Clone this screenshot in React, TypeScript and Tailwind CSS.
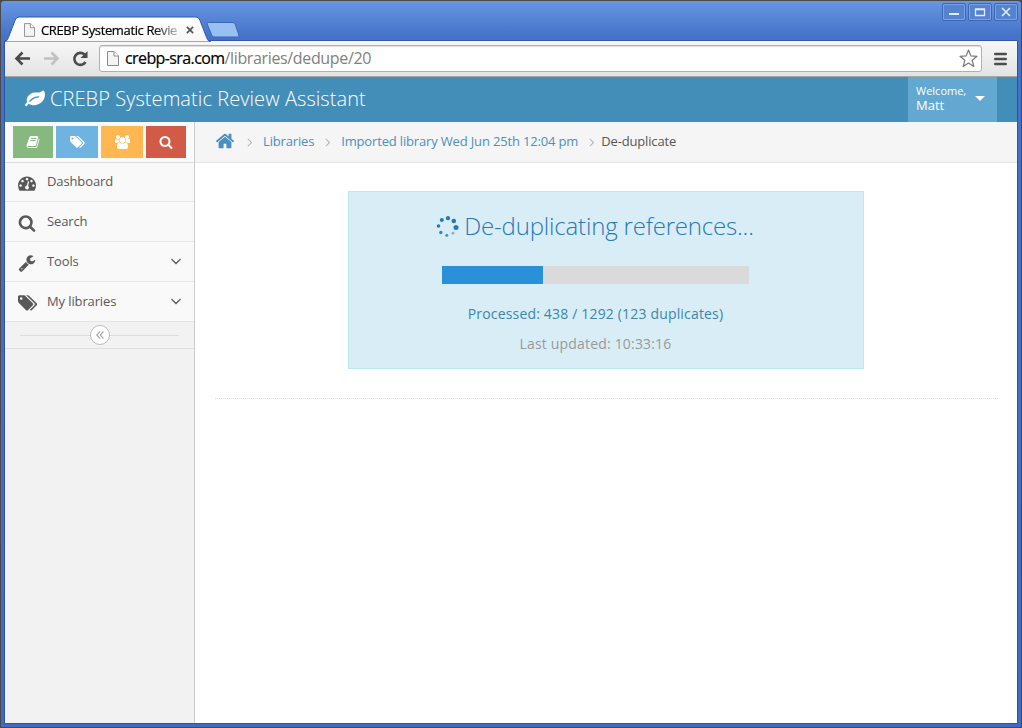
import React from "react";

const P = {
  search: "M1216 832q0-185-131.5-316.5t-316.5-131.5-316.5 131.5-131.5 316.5 131.5 316.5 316.5 131.5 316.5-131.5 131.5-316.5zm512 832q0 52-38 90t-90 38q-54 0-90-38l-343-342q-179 124-399 124-143 0-273.5-55.5t-225-150-150-225-55.5-273.5 55.5-273.5 150-225 225-150 273.5-55.5 273.5 55.5 225 150 150 225 55.5 273.5q0 220-124 399l343 343q37 37 37 90z",
  home: "M1472 992v480q0 26-19 45t-45 19h-384v-384h-256v384h-384q-26 0-45-19t-19-45v-480q0-1 .5-3t.5-3l575-474 575 474q1 2 1 6zm223-69l-62 74q-8 9-21 11h-3q-13 0-21-7l-692-577-692 577q-12 8-24 7-13-2-21-11l-62-74q-8-10-7-23.5t11-21.5l719-599q32-26 76-26t76 26l244 204v-195q0-14 9-23t23-9h192q14 0 23 9t9 23v408l219 182q10 8 11 21.5t-7 23.5z",
  down: "M1395 736q0 13-10 23l-466 466q-10 10-23 10t-23-10l-466-466q-10-10-10-23t10-23l50-50q10-10 23-10t23 10l393 393 393-393q10-10 23-10t23 10l50 50q10 10 10 23z",
  right: "M1171 960q0 13-10 23l-466 466q-10 10-23 10t-23-10l-50-50q-10-10-10-23t10-23l393-393-393-393q-10-10-10-23t10-23l50-50q10-10 23-10t23 10l466 466q10 10 10 23z",
  wrench: "M448 1472q0-26-19-45t-45-19-45 19-19 45 19 45 45 19 45-19 19-45zm644-420l-682 682q-37 37-90 37-52 0-91-37l-106-108q-38-36-38-90 0-53 38-91l681-681q39 98 114.5 173.5t173.5 114.5zm634-435q0 39-23 106-47 134-164.5 217.5t-258.5 83.5q-185 0-316.5-131.5t-131.5-316.5 131.5-316.5 316.5-131.5q58 0 121.5 16.5t107.5 46.5q16 11 16 28t-16 28l-293 169v224l193 107q5-3 79-48.5t135.5-81 70.5-35.5q15 0 23.5 10t8.5 25z",
  tags: "M448 448q0-53-37.5-90.5t-90.5-37.5-90.5 37.5-37.5 90.5 37.5 90.5 90.5 37.5 90.5-37.5 37.5-90.5zm1067 576q0 53-37 90l-491 492q-39 37-91 37-53 0-90-37l-715-716q-38-37-64.5-101t-26.5-117v-416q0-52 38-90t90-38h416q53 0 117 26.5t102 64.5l715 714q37 39 37 91zm384 0q0 53-37 90l-491 492q-39 37-91 37-36 0-59-14t-53-45l470-470q37-37 37-90 0-52-37-91l-715-714q-38-38-102-64.5t-117-26.5h224q53 0 117 26.5t102 64.5l715 714q37 39 37 91z",
  leaf: "M1280 704q0-26-19-45t-45-19q-172 0-318 49.5t-259.5 134-235.5 219.5q-19 21-19 45 0 26 19 45t45 19q24 0 45-19 27-24 74-71t67-66q137-124 268.5-176t313.5-52q26 0 45-19t19-45zm512-198q0 95-20 193-46 224-184.5 383t-357.5 268q-214 108-438 108-148 0-286-47-15-5-88-42t-96-37q-16 0-39.5 32t-45 70-52.5 70-60 32q-43 0-63.5-17.5t-45.5-59.5q-2-4-6-11t-5.5-10-3-9.5-1.500-13.500q0-35 31-73.500t68-65.500 68-56 31-48q0-4-14-38t-16-44q-9-51-9-104 0-115 43.500-220t119-184.500 170.500-139 204-95.500q55-18 145-25.500t179.500-9 178.500-6 163.500-24 113.500-56.500l29.500-29.500 29.500-28 27-20 36.500-16 43.500-4.500q39 0 70.500 46t47.500 112 24 124 8 96z",
  dashboard: "M384 1152q0-53-37.5-90.5t-90.5-37.5-90.5 37.5-37.5 90.5 37.5 90.5 90.5 37.5 90.5-37.5 37.5-90.5zm192-448q0-53-37.5-90.5t-90.5-37.5-90.5 37.5-37.5 90.5 37.5 90.5 90.5 37.5 90.5-37.5 37.5-90.5zm428 481l101-382q6-26-7.5-48.5t-38.5-29.5-48 6.5-30 39.5l-101 382q-60 5-107 43.5t-63 98.5q-20 77 20 146t117 89 146-20 89-117q16-60-6-117t-72-91zm660-33q0-53-37.5-90.5t-90.5-37.5-90.5 37.5-37.5 90.5 37.5 90.5 90.5 37.5 90.5-37.5 37.5-90.5zm-640-640q0-53-37.5-90.5t-90.5-37.5-90.5 37.5-37.5 90.5 37.5 90.5 90.5 37.5 90.5-37.5 37.5-90.5zm448 192q0-53-37.5-90.5t-90.5-37.5-90.5 37.5-37.5 90.5 37.5 90.5 90.5 37.5 90.5-37.5 37.5-90.5zm320 448q0 261-141 483-19 29-54 29h-1402q-35 0-54-29-141-221-141-483 0-182 71-348t191-286 286-191 348-71 348 71 286 191 191 286 71 348z",
  book: "M1703 478q40 57 18 129l-275 906q-19 64-76.5 107.5t-122.5 43.5h-923q-77 0-148.5-53.5t-99.5-131.5q-24-67-2-127 0-4 3-27t4-37q1-8-3-21.5t-3-19.5q2-11 8-21t16.5-23.5 16.5-23.5q23-38 45-91.5t30-91.5q3-10 .5-30t-.5-28q3-11 17-28t17-23q21-36 42-92t25-90q1-9-2.5-32t.5-28q4-13 22-30.5t22-22.5q19-26 42.5-84.5t27.5-96.5q1-8-3-25.5t-2-26.5q2-8 9-18t18-23 17-21q8-12 16.5-30.5t15-35 16-36 19.5-32 26.5-23.5 36-11.5 47.5 5.5l-1 3q38-9 51-9h761q74 0 114 56t18 130l-274 906q-36 119-71.5 153.5t-128.5 34.5h-869q-27 0-38 15-11 16-1 43 24 70 144 70h923q29 0 56-15.5t35-41.5l300-987q7-22 5-57 38 15 59 43zm-1064 2q-4 13 2 22.5t20 9.5h608q13 0 25.5-9.5t16.5-22.5l21-64q4-13-2-22.5t-20-9.5h-608q-13 0-25.5 9.5t-16.5 22.5zm-83 256q-4 13 2 22.5t20 9.5h608q13 0 25.5-9.5t16.5-22.5l21-64q4-13-2-22.5t-20-9.5h-608q-13 0-25.5 9.5t-16.5 22.5z",
  group: "M593 896q-162 5-265 128h-134q-82 0-138-40.5t-56-118.5q0-353 124-353 6 0 43.5 21t97.5 42.5 119 21.5q67 0 133-23-5 37-5 66 0 159 93 299zm1071 637q0 120-73 189.5t-194 69.5h-874q-121 0-194-69.5t-73-189.5q0-53 3.5-103.5t14-109 26.5-108.5 43-97.5 62-81 85.5-53.5 111.5-20q10 0 43 21.5t73 48 107 48 135 21.5 135-21.5 107-48 73-48 43-21.5q61 0 111.5 20t85.5 53.5 62 81 43 97.5 26.5 108.5 14 109 3.5 103.5zm-1024-1277q0 106-75 181t-181 75-181-75-75-181 75-181 181-75 181 75 75 181zm704 384q0 159-112.5 271.5t-271.5 112.5-271.5-112.5-112.5-271.5 112.5-271.5 271.5-112.5 271.5 112.5 112.5 271.5zm576 225q0 78-56 118.5t-138 40.5h-134q-103-123-265-128 93-140 93-299 0-29-5-66 66 23 133 23 59 0 119-21.5t97.5-42.5 43.5-21q124 0 124 353zm-128-609q0 106-75 181t-181 75-181-75-75-181 75-181 181-75 181 75 75 181z",
};

function Icon({ d, size, className = "", w = 1792 }: { d: string; size: number; className?: string; w?: number }) {
  return (
    <svg className={"shrink-0 " + className} width={(size * w) / 1792} height={size} viewBox={`0 0 ${w} 1792`} fill="currentColor">
      <path d={d} />
    </svg>
  );
}

function PageIcon({ className, w, h }: { className: string; w: number; h: number }) {
  return (
    <svg className={"shrink-0 " + className} width={w} height={h} viewBox="0 0 12 15" fill="#f4f4f4" stroke="#8a8a8a">
      <path d="M.5.5h6.5l4.500 4.500v9.500H.5z" />
      <path d="M7 .5V5h4.500" fill="#fff" />
    </svg>
  );
}

function WindowButton({ children }: { children: React.ReactNode }) {
  return (
    <span className="h-[18px] w-[24px] rounded-[2px] border border-[#3c67b5] bg-[#5583d2] shadow-[inset_0_0_0_1px_#7ba2e4]">
      <svg width="22" height="16" viewBox="0 0 22 16" fill="none" stroke="#e4ecfa">{children}</svg>
    </span>
  );
}

function TitleBar() {
  return (
    <div className="flex h-[40px] shrink-0 items-start">
      <div className="relative flex h-[40px] w-[203px] shrink-0 items-center pt-[17px]">
        <svg className="absolute left-0 top-[15px]" width="240" height="26" viewBox="0 0 240 26">
          <defs>
            <linearGradient id="tab" x1="0" y1="0" x2="0" y2="1">
              <stop offset="0" stopColor="#fff" />
              <stop offset="1" stopColor="#f7f7f7" />
            </linearGradient>
          </defs>
          <path d="M0 26C3 25 3.500 24 5 20L11 4.500C12 2 13 1 16 1H191C194 1 195 2 196 4.500L202 20C203.500 24 204 25 207 26z" fill="url(#tab)" stroke="#3059a8" />
          <path d="M204.500 6.500H228C230 6.500 231 7.500 231.500 9L234.500 18C235 20 234.500 21 232.500 21H211C209 21 208 20 207.500 18.500L203.500 9C203 7.500 203 6.500 204.500 6.500z" fill="#99c0f3" stroke="#3867b8" />
        </svg>
        <PageIcon className="relative ml-[20px]" w={11} h={14} />
        <span className="relative ml-[6px] w-[138px] overflow-hidden whitespace-nowrap text-[13px] leading-[18px] tracking-[-0.36px] text-black [-webkit-text-stroke:0.2px_#000] [mask-image:linear-gradient(to_right,#000_112px,rgba(0,0,0,0.2)_138px)]">
          CREBP Systematic Revie
        </span>
        <svg className="relative ml-[7px]" width="8" height="8" viewBox="0 0 9 9" stroke="#555" strokeWidth="1.900">
          <path d="M1 1l7 7M8 1L1 8" />
        </svg>
      </div>
      <div className="ml-auto flex gap-[2px] pt-[2px]">
        <WindowButton><path d="M6 10h10" strokeWidth="2" /></WindowButton>
        <WindowButton><path d="M6.500 5.500h9v6h-9zM6 5h10" strokeWidth="1.300" /></WindowButton>
        <WindowButton><path d="M7 4l8 8M15 4l-8 8" strokeWidth="1.700" /></WindowButton>
      </div>
    </div>
  );
}

function Toolbar() {
  return (
    <div className="flex h-[36px] shrink-0 items-center border-b border-[#a5a5a5] bg-gradient-to-b from-[#f7f7f7] to-[#e3e3e3] shadow-[0_-1px_0_#3059a8]">
      <svg className="ml-[9px]" width="77" height="18" viewBox="0 0 77 18" fill="none" strokeWidth="2.600">
        <path d="M16 8.500H3M8.500 2.500L2.500 8.500l6 6" stroke="#4a4a4a" />
        <path d="M30 8.500h13M37.500 2.500l6 6-6 6" stroke="#c0c0c0" />
        <path d="M71.500 12A6 6 0 1 1 70.500 4.500" stroke="#4a4a4a" />
        <path d="M73.500 1v7h-7z" fill="#4a4a4a" />
      </svg>
      <div className="ml-[8px] flex h-[27px] w-[883px] items-center rounded-[3px] border border-[#b0b0b0] bg-white shadow-[inset_0_1px_1px_#ddd]">
        <PageIcon className="ml-[7px]" w={12} h={15} />
        <span className="ml-[6px] whitespace-nowrap pb-[2px] text-[16px] leading-[22px] tracking-[-0.35px] text-[#808080]">
          <span className="tracking-[-0.6px] text-black [-webkit-text-stroke:0.2px_#000]">crebp-sra.com</span>/libraries/dedupe/20
        </span>
        <svg className="ml-auto mr-[3px]" width="19" height="19" viewBox="0 0 19 19" fill="#fff" stroke="#777" strokeWidth="1.200" strokeLinejoin="round">
          <path d="M9.500 1l2.300 5.900 6.200.4-4.800 4 1.600 6.200-5.300-3.400-5.300 3.400 1.600-6.200-4.800-4 6.200-.4z" />
        </svg>
      </div>
      <svg className="ml-[12px]" width="13" height="14" viewBox="0 0 13 14" stroke="#4d4d4d" strokeWidth="2.600" strokeLinecap="round">
        <path d="M1.300 2h10.400M1.300 7h10.400M1.300 12h10.400" />
      </svg>
    </div>
  );
}

function NavItem({ label, icon, expandable, w }: { label: string; icon: string; expandable?: boolean; w?: number }) {
  return (
    <div className="flex h-[40px] items-end border-b border-[#e5e5e5] bg-[#f9f9f9] pl-[13px] text-[#585858] first:h-[39px]">
      <span className="flex w-[29px] pb-[9px]"><Icon d={icon} size={18} w={w} /></span>
      <span className="pb-[10px] text-[13px] leading-[20px] tracking-[-0.12px]">{label}</span>
      {expandable && <Icon d={P.down} size={18} className="mb-[11px] ml-auto mr-[9px]" />}
    </div>
  );
}

function Sidebar() {
  return (
    <aside className="flex w-[190px] shrink-0 flex-col border-r border-[#ccc] bg-[#f2f2f2]">
      <div className="flex h-[41px] items-start gap-[3px] border-b border-[#ddd] bg-[#fafafa] pl-[8px] pt-[4px] text-white">
        <span className="flex h-[32px] w-[40px] items-center justify-center bg-[#87b87f]"><Icon d={P.book} size={14} /></span>
        <span className="flex h-[32px] w-[42px] items-center justify-center bg-[#6fb3e0]"><Icon d={P.tags} size={14} w={1920} /></span>
        <span className="flex h-[32px] w-[42px] items-center justify-center bg-[#ffb752]"><Icon d={P.group} size={14} w={1920} /></span>
        <span className="flex h-[32px] w-[40px] items-center justify-center bg-[#d15b47]"><Icon d={P.search} size={14} /></span>
      </div>
      <nav>
        <NavItem label="Dashboard" icon={P.dashboard} />
        <NavItem label="Search" icon={P.search} />
        <NavItem label="Tools" icon={P.wrench} expandable />
        <NavItem label="My libraries" icon={P.tags} w={1920} expandable />
      </nav>
      <div className="flex h-[27px] items-center border-b border-[#e0e0e0] px-[15px]">
        <span className="h-px flex-1 bg-[#ddd]" />
        <span className="flex h-[20px] w-[20px] items-center justify-center rounded-full border border-[#bbb] bg-white">
          <svg width="10" height="10" viewBox="0 0 10 10" fill="none" stroke="#aaa" strokeWidth="1.100">
            <path d="M5 1.500L1.700 5 5 8.500M8.500 1.500L5.200 5 8.500 8.500" />
          </svg>
        </span>
        <span className="h-px flex-1 bg-[#ddd]" />
      </div>
    </aside>
  );
}

const dots = [
  [22, 11.5, 2.5, 1], [19.8, 5, 2.3, 1], [14, 2.2, 2.1, 1], [7.8, 4, 2, 1],
  [4.5, 10, 1.8, 1], [6.8, 16.5, 1.7, 0.9], [12.8, 19.3, 1.5, 0.8], [19, 17.2, 1.4, 0.5],
];

export default function App() {
  return (
    <div className="h-[728px] w-[1022px] overflow-hidden bg-[#4a4a4a] font-['Open_Sans','Noto_Sans',sans-serif]">
      <div className="flex h-[727px] flex-col rounded-t-[4px] border-x border-t border-[#4a4a4a] bg-[#4472c8] bg-[linear-gradient(to_bottom,#6796e2_0,#4472c8_36px,#3f6cc2_100%)] px-[3px] pb-[3px]">
        <TitleBar />
        <div className="flex min-h-0 flex-1 flex-col border-x border-b border-[#2f549f]">
          <Toolbar />
          <header className="flex h-[45px] shrink-0 items-center bg-[#438eb9] pl-[20px] text-white">
            <Icon d={P.leaf} size={20} className="mb-[2px]" />
            <h1 className="ml-[5px] pb-[2px] text-[20px] font-light leading-[28px] tracking-[0.07px]">CREBP Systematic Review Assistant</h1>
            <div className="ml-auto mr-[20px] flex h-[45px] w-[89px] items-center bg-[#62a8d1] pl-[8px]">
              <div className="w-[59px] pb-[2px] text-[13px] leading-[15px]">
                <div className="text-[11px] leading-[14px]">Welcome,</div>
                Matt
              </div>
              <svg className="mb-[2px]" width="10" height="5" viewBox="0 0 10 5" fill="#fff"><path d="M0 0h10L5 5z" /></svg>
            </div>
          </header>
          <div className="flex min-h-0 flex-1 bg-white">
            <Sidebar />
            <main className="min-w-0 flex-1">
              <div className="flex h-[41px] items-center border-b border-[#e5e5e5] bg-[#f5f5f5] text-[13px] tracking-[-0.16px] text-[#4c8fbd]">
                <Icon d={P.home} size={20} className="mb-[2px] ml-[20px]" />
                <Icon d={P.right} size={14} className="ml-[8px] text-[#b2b6bf]" />
                <span className="ml-[6px]">Libraries</span>
                <Icon d={P.right} size={14} className="ml-[7px] text-[#b2b6bf]" />
                <span className="ml-[6px]">Imported library Wed Jun 25th 12:04 pm</span>
                <Icon d={P.right} size={14} className="ml-[7px] text-[#b2b6bf]" />
                <span className="ml-[2px] text-[#555]">De-duplicate</span>
              </div>
              <div className="ml-[20px] mr-[19px] border-b border-dotted border-[#ddd] pb-[29px] pt-[28px]">
                <section className="ml-[133px] flex h-[178px] w-[516px] flex-col items-center border border-[#bce8f1] bg-[#d9edf7] pr-[21px]">
                  <div className="mr-[2px] mt-[18px] flex h-[34px] items-center">
                    <svg width="26" height="22" viewBox="0 0 26 22" fill="#2679b5">
                      {dots.map(([x, y, r, o]) => <circle key={`${x}-${y}`} cx={x - 1} cy={y} r={r} opacity={o} />)}
                    </svg>
                    <h2 className="ml-[3px] whitespace-nowrap pb-[2px] text-[24px] font-light leading-[34px] tracking-[-0.18px] text-[#2679b5]">De-duplicating references...</h2>
                  </div>
                  <div className="mt-[22px] h-[18px] w-[307px] bg-[#dadada]">
                    <div className="h-full w-[101px] bg-[#2a91d8]" />
                  </div>
                  <p className="mt-[20px] text-[14px] leading-[20px] tracking-[0.17px] text-[#3a87ad]">Processed: 438 / 1292 (123 duplicates)</p>
                  <p className="mt-[10px] text-[14px] leading-[20px] tracking-[0.18px] text-[#999]">Last updated: 10:33:16</p>
                </section>
              </div>
            </main>
          </div>
        </div>
      </div>
    </div>
  );
}
